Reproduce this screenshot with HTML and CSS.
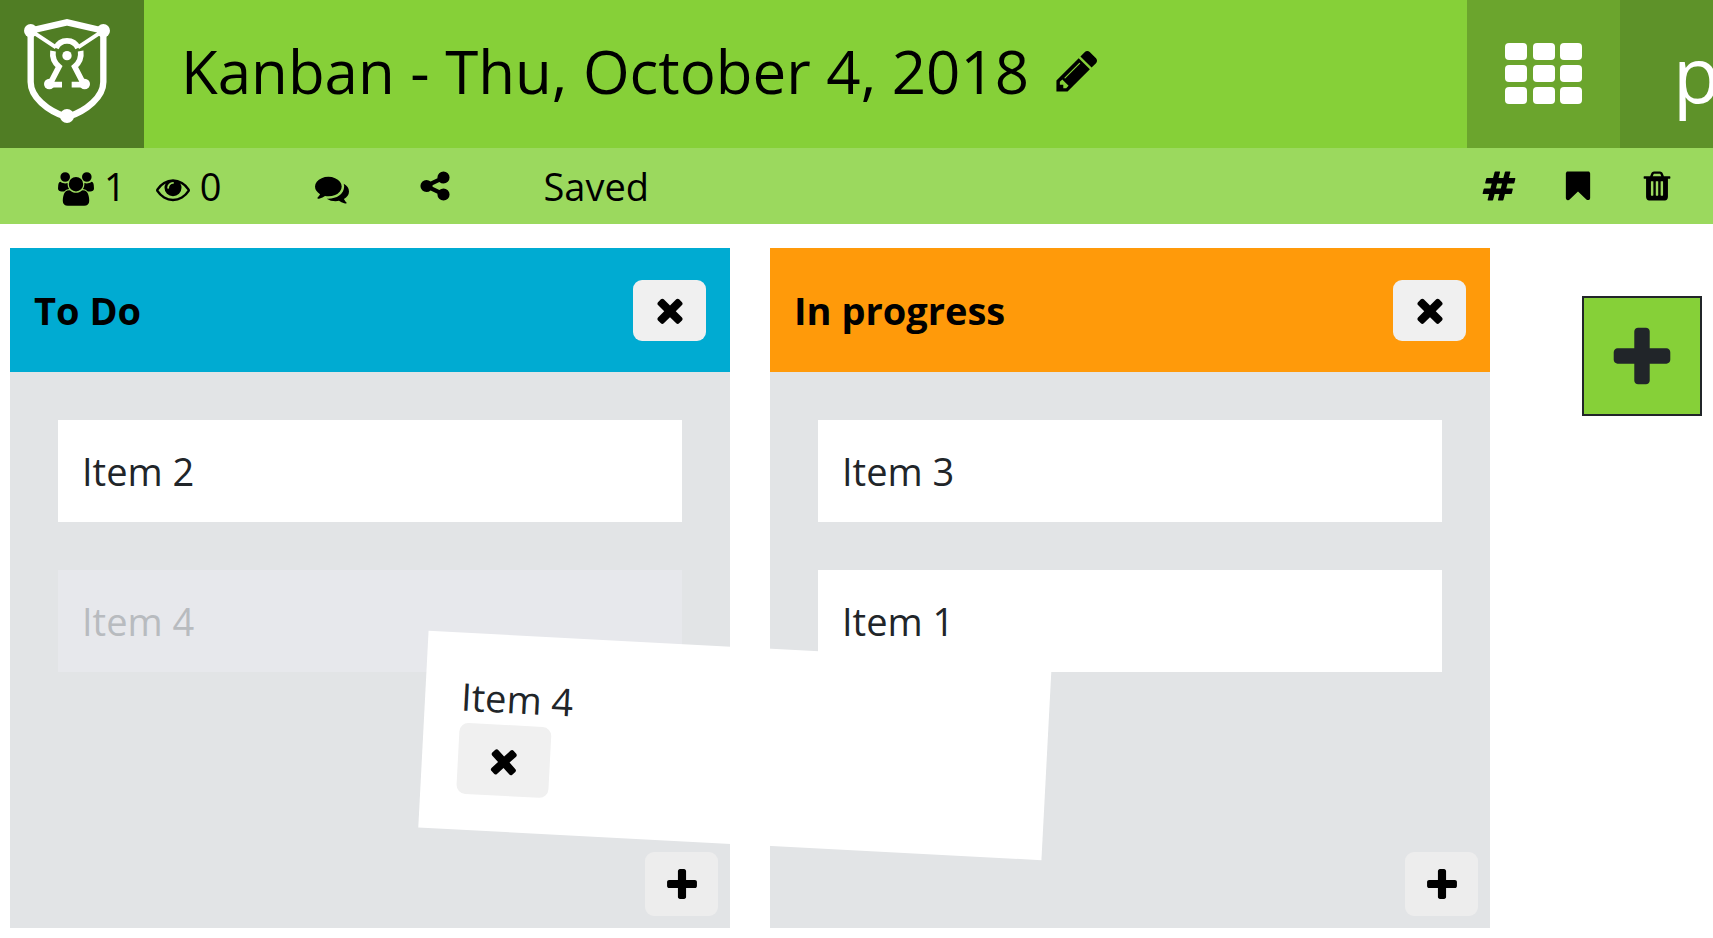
FILE: index.html
```html
<!DOCTYPE html>
<html lang="en">
<head>
<meta charset="utf-8">
<title>Kanban - Thu, October 4, 2018</title>
<link rel="stylesheet" href="styles.css">
</head>
<body>
<svg class="sprite" aria-hidden="true">
  <symbol id="times" viewBox="0 0 1792 1792"><path d="M1490 1322q0 40-28 68l-136 136q-28 28-68 28t-68-28l-294-294-294 294q-28 28-68 28t-68-28l-136-136q-28-28-28-68t28-68l294-294-294-294q-28-28-28-68t28-68l136-136q28-28 68-28t68 28l294 294 294-294q28-28 68-28t68 28l136 136q28 28 28 68t-28 68l-294 294 294 294q28 28 28 68z"/></symbol>
  <symbol id="plus" viewBox="0 -64 1792 1792"><path d="M1600 736v192q0 40-28 68t-68 28h-416v416q0 40-28 68t-68 28h-192q-40 0-68-28t-28-68v-416h-416q-40 0-68-28t-28-68v-192q0-40 28-68t68-28h416v-416q0-40 28-68t68-28h192q40 0 68 28t28 68v416h416q40 0 68 28t28 68z"/></symbol>
</svg>

<header class="topbar">
  <a class="logo" href="#" aria-label="Home">
    <svg viewBox="0 0 432 444" fill="none" stroke="#fff" stroke-width="19">
      <path d="M92 92 L201 67 L310 92 V246 C310 290 262 332 201 352 C140 332 92 290 92 246 Z"/>
      <path d="M100 97 L168 142 M302 97 L234 142" stroke-width="12"/>
      <path d="M168 144 A36 36 0 0 1 234 144" stroke-width="17"/>
      <path d="M159 153 C156 174 163 188 177 200 L149 254 H186 M242 153 C245 174 238 188 224 200 L252 254 H215" stroke-width="17"/>
      <g fill="#fff" stroke="none"><circle cx="92" cy="92" r="20"/><circle cx="310" cy="92" r="20"/><circle cx="201" cy="348" r="21"/><circle cx="148" cy="252" r="16"/><circle cx="254" cy="252" r="16"/><circle cx="201" cy="167" r="14"/></g>
    </svg>
  </a>
  <div class="heading">
    <h1>Kanban - Thu, October 4, 2018</h1>
    <button class="edit" aria-label="Edit title"><svg viewBox="0 0 1792 1792"><path d="M491 1536l91-91-235-235-91 91v107h128v128h107zm523-928q0-22-22-22-10 0-17 7l-542 542q-7 7-7 17 0 22 22 22 10 0 17-7l542-542q7-7 7-17zm-54-192l416 416-832 832h-416v-416zm683 96q0 53-37 90l-166 166-416-416 166-165q36-38 90-38 53 0 91 38l235 234q37 39 37 91z"/></svg></button>
  </div>
  <button class="apps" aria-label="Applications">
    <svg viewBox="0 0 78 61"><g id="r"><rect width="22" height="17" rx="4"/><rect x="28" width="22" height="17" rx="4"/><rect x="55" width="22" height="17" rx="4"/></g><use href="#r" y="22"/><use href="#r" y="44"/></svg>
  </button>
  <button class="user">p</button>
</header>

<div class="toolbar">
  <span class="count users"><svg class="low wide" viewBox="0 0 1920 1792"><path d="M593 896q-162 5-265 128h-134q-82 0-138-40.5t-56-118.5q0-353 124-353 6 0 43.5 21t97.5 42.5 119 21.5q67 0 133-23-5 37-5 66 0 139 81 256zm1071 637q0 120-73 189.5t-194 69.5h-874q-121 0-194-69.5t-73-189.5q0-53 3.5-103.5t14-109 26.5-108.5 43-97.5 62-81 85.5-53.5 111.5-20q10 0 43 21.5t73 48 107 48 135 21.5 135-21.5 107-48 73-48 43-21.5q61 0 111.5 20t85.5 53.5 62 81 43 97.5 26.5 108.5 14 109 3.5 103.5zm-1024-1277q0 106-75 181t-181 75-181-75-75-181 75-181 181-75 181 75 75 181zm704 384q0 159-112.5 271.5t-271.5 112.5-271.5-112.5-112.5-271.5 112.5-271.5 271.5-112.5 271.5 112.5 112.5 271.5zm576 225q0 78-56 118.5t-138 40.5h-134q-103-123-265-128 81-117 81-256 0-29-5-66 66 23 133 23 59 0 119-21.5t97.5-42.5 43.5-21q124 0 124 353zm-128-609q0 106-75 181t-181 75-181-75-75-181 75-181 181-75 181 75 75 181z"/></svg>1</span>
  <span class="count viewers"><svg class="low" viewBox="0 0 1792 1792"><path d="M1664 960q-152-236-381-353 61 104 61 225 0 185-131.5 316.5t-316.5 131.5-316.5-131.5-131.5-316.5q0-121 61-225-229 117-381 353 133 205 333.5 326.5t434.5 121.5 434.5-121.5 333.5-326.5zm-720-384q0-20-14-34t-34-14q-125 0-214.5 89.5t-89.5 214.5q0 20 14 34t34 14 34-14 14-34q0-86 61-147t147-61q20 0 34-14t14-34zm848 384q0 34-20 69-140 230-376.5 368.5t-499.5 138.5-499.5-139-376.5-368q-20-35-20-69t20-69q140-229 376.5-368t499.5-139 499.5 139 376.5 368q20 35 20 69z"/></svg>0</span>
  <button class="chat" aria-label="Chat"><svg class="low" viewBox="0 0 1792 1792"><path d="M1408 768q0 139-94 257t-256.500 186.500-353.500 68.500q-86 0-176-16-124 88-278 128-36 9-86 16h-3q-11 0-20.500-8t-11.500-21q-1-3-1-6.500t.5-6.500 2-6l2.500-5 3.500-5.500 4-5 4.500-5 4-4.500q5-6 23-25t26-29.500 22.500-29 25-38.500 20.500-44q-124-72-195-177t-71-224q0-139 94-257t256.500-186.500 353.500-68.500 353.500 68.500 256.500 186.500 94 257zm384 256q0 120-71 224.500t-195 176.500q10 24 20.500 44t25 38.500 22.500 29 26 29.500 23 25q1 1 4 4.500t4.500 5 4 5 3.500 5.500l2.500 5 2 6 .5 6.500-1 6.500q-3 14-13 22t-22 7q-50-7-86-16-154-40-278-128-90 16-176 16-271 0-472-132 58 4 88 4 161 0 309-45t264-129q125-92 192-212t67-254q0-77-23-152 129 71 204 178t75 230z"/></svg></button>
  <button class="share" aria-label="Share"><svg viewBox="0 0 1792 1792"><path d="M1344 1024q133 0 226.500 93.500t93.500 226.500-93.500 226.500-226.500 93.500-226.500-93.500-93.500-226.500q0-12 2-34l-360-180q-92 86-218 86-133 0-226.500-93.500t-93.500-226.500 93.500-226.500 226.500-93.500q126 0 218 86l360-180q-2-22-2-34 0-133 93.500-226.500t226.500-93.500 226.500 93.500 93.500 226.500-93.500 226.500-226.500 93.500q-126 0-218-86l-360 180q2 22 2 34t-2 34l360 180q92-86 218-86z"/></svg></button>
  <span class="state">Saved</span>
  <div class="tools">
    <button aria-label="Tags"><svg viewBox="0 0 1792 1792"><path d="M991 1024l64-256h-254l-64 256h254zm768-504l-56 224q-7 24-31 24h-327l-64 256h311q15 0 25 12 10 14 6 28l-56 224q-5 24-31 24h-327l-81 328q-7 24-31 24h-224q-16 0-26-12-9-12-6-28l78-312h-254l-81 328q-7 24-31 24h-225q-15 0-25-12-9-12-6-28l78-312h-311q-15 0-25-12-9-12-6-28l56-224q7-24 31-24h327l64-256h-311q-15 0-25-12-10-14-6-28l56-224q5-24 31-24h327l81-328q7-24 32-24h224q15 0 25 12 9 12 6 28l-78 312h254l81-328q7-24 32-24h224q15 0 25 12 9 12 6 28l-78 312h311q15 0 25 12 9 12 6 28z"/></svg></button>
    <button aria-label="Save as template"><svg viewBox="0 0 1792 1792"><path d="M1420 128q23 0 44 9 33 13 52.500 41t19.500 62v1289q0 34-19.500 62t-52.500 41q-19 8-44 8-48 0-83-32l-441-424-441 424q-36 33-83 33-23 0-44-9-33-13-52.500-41t-19.500-62v-1289q0-34 19.500-62t52.500-41q21-9 44-9h1048z"/></svg></button>
    <button aria-label="Delete"><svg viewBox="0 0 1792 1792"><path d="M704 1376v-704q0-14-9-23t-23-9h-64q-14 0-23 9t-9 23v704q0 14 9 23t23 9h64q14 0 23-9t9-23zm256 0v-704q0-14-9-23t-23-9h-64q-14 0-23 9t-9 23v704q0 14 9 23t23 9h64q14 0 23-9t9-23zm256 0v-704q0-14-9-23t-23-9h-64q-14 0-23 9t-9 23v704q0 14 9 23t23 9h64q14 0 23-9t9-23zm-544-992h448l-48-117q-7-9-17-11h-317q-10 2-17 11zm928 32v64q0 14-9 23t-23 9h-96v948q0 83-47 143.500t-113 60.500h-832q-66 0-113-58.500t-47-141.500v-952h-96q-14 0-23-9t-9-23v-64q0-14 9-23t23-9h309l70-167q15-37 54-63t79-26h320q40 0 79 26t54 63l70 167h309q14 0 23 9t9 23z"/></svg></button>
  </div>
</div>

<main class="board">
  <section class="column">
    <header class="column-head blue"><h2>To Do</h2><button class="key" aria-label="Delete board"><svg><use href="#times"/></svg></button></header>
    <div class="items">
      <article class="card">Item 2</article>
      <article class="card ghost">Item 4</article>
    </div>
    <footer><button class="key tall" aria-label="Add item"><svg><use href="#plus"/></svg></button></footer>
  </section>
  <section class="column">
    <header class="column-head orange"><h2>In progress</h2><button class="key" aria-label="Delete board"><svg><use href="#times"/></svg></button></header>
    <div class="items">
      <article class="card">Item 3</article>
      <article class="card">Item 1</article>
    </div>
    <footer><button class="key tall" aria-label="Add item"><svg><use href="#plus"/></svg></button></footer>
  </section>
  <button class="add-board" aria-label="Add board"><svg><use href="#plus"/></svg></button>
  <article class="dragged">
    Item 4
    <button class="key big" aria-label="Delete item"><svg><use href="#times"/></svg></button>
  </article>
</main>
</body>
</html>
```
FILE: styles.css
```css
* { box-sizing: border-box; }

body {
  margin: 0;
  min-height: 100vh;
  display: flex;
  flex-direction: column;
  background: #fff;
  color: #212529;
  font: 38px/54px "Open Sans", sans-serif;
  overflow-x: hidden;
}

h1, h2 { margin: 0; }

button {
  margin: 0;
  padding: 0;
  border: 0;
  background: none;
  color: #000;
  font: inherit;
}

svg { display: block; flex: none; fill: currentColor; }
.sprite { position: absolute; width: 0; height: 0; }

.topbar {
  display: flex;
  height: 148px;
  background: #86d038;
  color: #000;
}
.logo { flex: none; width: 144px; background: #507d24; }
.logo svg { width: 144px; height: 148px; fill: none; }
.heading {
  flex: 1;
  min-width: 0;
  display: flex;
  align-items: center;
  gap: 24px;
  padding: 0 0 6px 37px;
}
.heading h1 { font-size: 60px; font-weight: 400; line-height: 82px; white-space: nowrap; }
.edit svg { width: 48px; height: 48px; }
.apps {
  flex: none;
  width: 153px;
  padding-bottom: 2px;
  display: grid;
  place-items: center;
  background: #6ba52d;
  color: #fff;
}
.apps svg { width: 78px; height: 61px; }
.user {
  flex: none;
  width: 93px;
  padding-left: 53px;
  overflow: hidden;
  background: #5e9229;
  color: #fff;
  font-size: 77px;
  line-height: 104px;
  text-align: left;
}

.toolbar {
  display: flex;
  align-items: center;
  height: 76px;
  padding: 0 39px 0 58px;
  background: #9bd95e;
  color: #000;
}
.toolbar svg { width: 34px; height: 34px; }
.toolbar .wide { width: 36px; }
.toolbar .low { margin-top: 6px; }
.count { display: flex; align-items: center; gap: 10px; }
.viewers { margin-left: 30px; }
.chat { margin-left: 94px; }
.share { margin-left: 69px; }
.state { margin-left: 91px; }
.tools { display: flex; gap: 45px; margin-left: auto; }

.board {
  position: relative;
  flex: 1;
  display: flex;
  gap: 40px;
  padding: 24px 11px 10px 10px;
}
.column {
  flex: 1;
  display: flex;
  flex-direction: column;
  background: #e2e4e6;
}
.column-head {
  display: flex;
  align-items: center;
  justify-content: space-between;
  height: 124px;
  padding: 0 24px;
  color: #000;
}
.column-head h2 { font-size: 38px; font-weight: 700; }
.blue { background: #00abd2; }
.orange { background: #ff9a0a; }

.items {
  flex: 1;
  display: flex;
  flex-direction: column;
  gap: 48px;
  padding: 48px;
}
.card { padding: 24px; background: #fff; }
.ghost { background: #e7e8ec; color: #b8bbbf; }
.column footer { display: flex; justify-content: flex-end; padding: 12px; }

.key {
  display: grid;
  place-items: center;
  width: 73px;
  height: 61px;
  border-radius: 9px;
  background: #f0f0f0;
}
.key svg { width: 38px; height: 38px; }
.tall { height: 64px; background: #ededed; }
.big { width: 92px; height: 71px; }

.add-board {
  flex: none;
  display: grid;
  place-items: center;
  width: 120px;
  height: 120px;
  margin: 48px 0 0 52px;
  border: 2px solid #212529;
  background: #86d038;
  color: #212529;
}
.add-board svg { width: 72px; height: 72px; }

/* Card that follows the pointer during a drag */
.dragged {
  position: absolute;
  left: 423px;
  top: 423px;
  width: 624px;
  padding: 36px;
  background: #fff;
  transform: rotate(3deg);
}
```
